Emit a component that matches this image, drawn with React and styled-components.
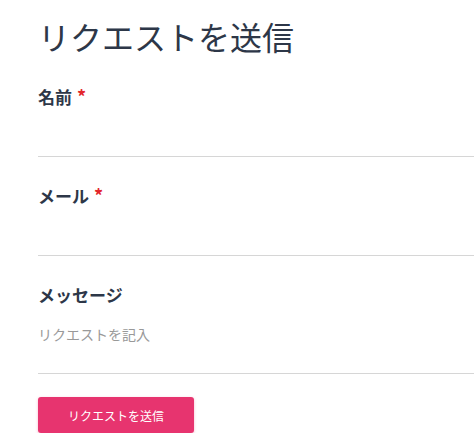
import React from "react";
import styled, { createGlobalStyle } from "styled-components";

const Global = createGlobalStyle`
  html, body { margin: 0; padding: 0; background: #fff; overflow: hidden; }
  body { font-family: "Noto Sans CJK JP", "Noto Sans", sans-serif; color: #2d3748; }
`;

const Page = styled.div`
  padding: 16px 0 0 38px;
`;

const Title = styled.h1`
  margin: 0 0 29px;
  font-size: 32px;
  line-height: 40px;
  font-weight: 400;
  color: #2d3748;
`;

const Form = styled.form`
  display: flex;
  flex-direction: column;
`;

const Field = styled.div`
  display: flex;
  flex-direction: column;
  margin-bottom: ${(p) => p.$gap || 28}px;
`;

const Label = styled.label`
  display: block;
  height: 24px;
  font-size: 17px;
  line-height: 24px;
  font-weight: 700;
  color: #2d3748;
`;

const Required = styled.span`
  color: #e3262b;
  margin-left: 5px;
  font-size: 18px;
  line-height: 1;
`;

const Input = styled.input`
  height: 48px;
  box-sizing: border-box;
  border: none;
  border-bottom: 1px solid #d6d6d6;
  outline: none;
  padding: 0;
  font: inherit;
  background: transparent;
`;

const TextArea = styled.textarea`
  height: 67px;
  box-sizing: border-box;
  border: none;
  border-bottom: 1px solid #d6d6d6;
  outline: none;
  resize: none;
  padding: 17px 0 0;
  font-family: inherit;
  font-size: 14px;
  line-height: 20px;
  color: #2d3748;
  background: transparent;
  &::placeholder { color: #999; }
`;

const Button = styled.button`
  width: 156px;
  height: 36px;
  border: none;
  border-radius: 3px;
  background: #e7346f;
  color: #fff;
  font-family: inherit;
  font-size: 12px;
  box-shadow: 0 1px 3px rgba(231, 52, 111, 0.35);
  cursor: pointer;
`;

export default function App() {
  return (
    <>
      <Global />
      <Page>
        <Title>リクエストを送信</Title>
        <Form onSubmit={(e) => e.preventDefault()}>
          <Field $gap={27}>
            <Label>名前<Required>*</Required></Label>
            <Input type="text" />
          </Field>
          <Field $gap={27}>
            <Label>メール<Required>*</Required></Label>
            <Input type="email" />
          </Field>
          <Field $gap={23}>
            <Label>メッセージ</Label>
            <TextArea placeholder="リクエストを記入" />
          </Field>
          <div>
            <Button type="submit">リクエストを送信</Button>
          </div>
        </Form>
      </Page>
    </>
  );
}
